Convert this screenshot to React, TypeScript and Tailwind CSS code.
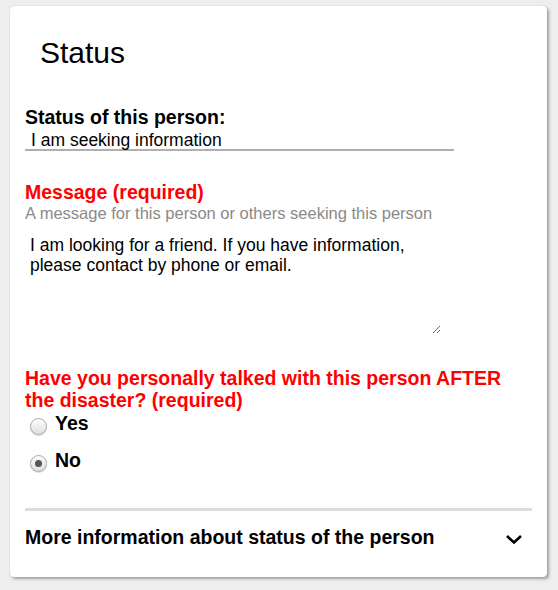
import { useState } from 'react';

const font = { fontFamily: '"Liberation Sans", Arial, Helvetica, sans-serif' };

function Radio({ checked }: { checked: boolean }) {
  return (
    <span className="mt-[6px] ml-[5px] flex h-[17px] w-[17px] shrink-0 items-center justify-center rounded-full border border-[#a8a8a8] bg-gradient-to-b from-[#ffffff] to-[#dedede] shadow-[0_1px_1px_rgba(0,0,0,0.15)]">
      {checked && <span className="h-[7px] w-[7px] rounded-full bg-[#555]" />}
    </span>
  );
}

export default function App() {
  const [talked, setTalked] = useState<'yes' | 'no'>('no');

  return (
    <div className="min-h-[590px] w-[558px] bg-[#efeeee] pt-[6px] pl-[10px]" style={font}>
      {/* Status card */}
      <div className="h-[571px] w-[537px] rounded-[4px] bg-white px-[15px] pt-[30px] shadow-[0_0_1px_rgba(0,0,0,0.3),2px_2px_3px_rgba(0,0,0,0.32)]">
        <h2 className="ml-[15px] text-[30px] leading-[34px] text-black">Status</h2>

        <div className="mt-[36px] text-[19.5px] font-bold leading-[22px] text-black">Status of this person:</div>
        <div className="h-[23px] w-[429px] border-b-2 border-[#b0b0b0] pt-[2px] pl-[6px] text-[17.5px] leading-[20px] text-black">
          I am seeking information
        </div>

        <div className="mt-[30px] text-[19.5px] font-bold leading-[22px] text-[#ff0000]">Message (required)</div>
        <div className="mt-[1px] text-[16.5px] leading-[19px] text-[#8a8a8a]">
          A message for this person or others seeking this person
        </div>
        <textarea
          className="mt-[4px] block h-[107px] w-[416px] border-0 px-[5px] py-[8px] text-[17.5px] leading-[20px] text-black outline-none"
          defaultValue={'I am looking for a friend. If you have information,\nplease contact by phone or email.'}
        />

        <div className="mt-[33px] text-[19.5px] font-bold leading-[22px] text-[#ff0000]">
          Have you personally talked with this person AFTER the disaster? (required)
        </div>
        <div className="mt-[1px] flex cursor-pointer items-start" onClick={() => setTalked('yes')}>
          <Radio checked={talked === 'yes'} />
          <span className="ml-[8px] text-[19.5px] font-bold leading-[22px] text-black">Yes</span>
        </div>
        <div className="mt-[14px] flex cursor-pointer items-start" onClick={() => setTalked('no')}>
          <Radio checked={talked === 'no'} />
          <span className="ml-[8px] text-[19.5px] font-bold leading-[22px] text-black">No</span>
        </div>

        <div className="mt-[36px] h-[3px] bg-[#dddddd]" />

        <div className="mt-[15px] flex items-center justify-between">
          <span className="text-[19.5px] font-bold leading-[22px] text-black">More information about status of the person</span>
          <svg width="18" height="11" viewBox="0 0 18 11" className="mt-[4px] mr-[9px]">
            <path d="M2 2 L9 8.5 L16 2" fill="none" stroke="#000" strokeWidth="2.6" />
          </svg>
        </div>
      </div>
    </div>
  );
}
